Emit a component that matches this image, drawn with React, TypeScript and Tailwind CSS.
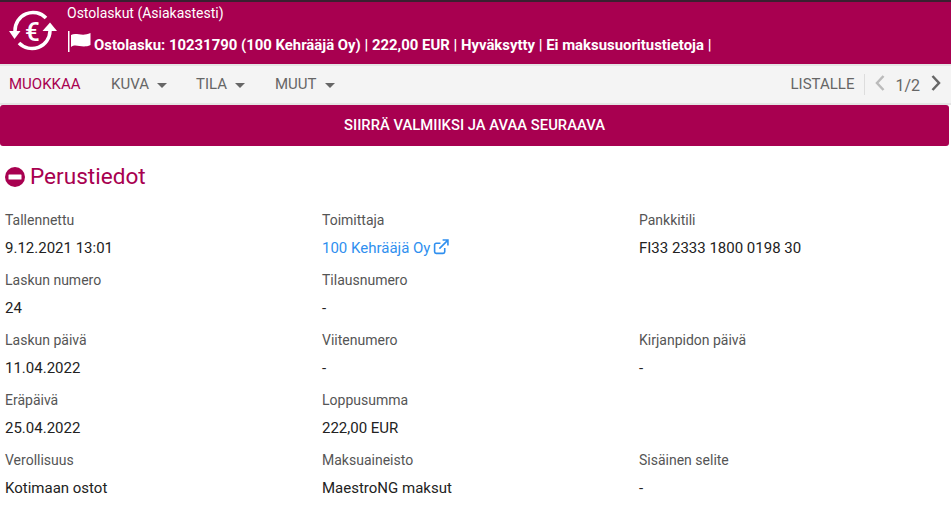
import React from 'react';

const rows = [
  [['Tallennettu', '9.12.2021 13:01'], ['Toimittaja', 'LINK'], ['Pankkitili', 'FI33 2333 1800 0198 30']],
  [['Laskun numero', '24'], ['Tilausnumero', '-'], null],
  [['Laskun päivä', '11.04.2022'], ['Viitenumero', '-'], ['Kirjanpidon päivä', '-']],
  [['Eräpäivä', '25.04.2022'], ['Loppusumma', '222,00 EUR'], null],
  [['Verollisuus', 'Kotimaan ostot'], ['Maksuaineisto', 'MaestroNG maksut'], ['Sisäinen selite', '-']],
] as const;

function Caret() {
  return <span className="ml-2 inline-block h-0 w-0 border-x-[5px] border-t-[5px] border-x-transparent border-t-[#666] align-middle" />;
}

function Logo() {
  return (
    <svg width="50" height="50" viewBox="0 0 50 50" fill="none" className="shrink-0">
      <path d="M7 23 A18 18 0 0 1 38 10" stroke="white" strokeWidth="3.5" />
      <path d="M42 23 A18 18 0 0 1 11 35" stroke="white" strokeWidth="3.5" />
      <path d="M1 23 H12.5 L6.5 31 Z" fill="white" />
      <path d="M49 23 H34.5 L42 14.5 Z" fill="white" />
      <text x="24.5" y="33" textAnchor="middle" fill="white" fontSize="26" fontWeight="500" fontFamily="Roboto, sans-serif">€</text>
    </svg>
  );
}

export default function App() {
  return (
    <div className="h-[512px] w-[951px] overflow-hidden bg-white font-['Roboto',sans-serif] text-[14px] text-[#222]">
      <header className="flex h-[64px] border-t-2 border-[#3a2030] bg-[#a80050] pl-[8px] text-white">
        <div className="mt-[6px]"><Logo /></div>
        <div className="ml-[9px]">
          <div className="mt-[2px] h-[18px] text-[14px] leading-[18px]">Ostolaskut (Asiakastesti)</div>
          <div className="mt-[13px] flex items-center text-[14.9px] font-bold leading-[20px]">
            <svg width="27" height="22" viewBox="0 0 27 22" className="-mt-[6px] shrink-0">
              <rect x="1" y="0" width="1.5" height="21" fill="white" />
              <path d="M4 4 C9 1 15 6 23.5 2 V14 C15 18 9 12 4 16 Z" fill="white" />
            </svg>
            <span>Ostolasku: 10231790 (100 Kehrääjä Oy) | 222,00 EUR | Hyväksytty | Ei maksusuoritustietoja |</span>
          </div>
        </div>
      </header>
      <nav className="flex h-[41px] items-center border-y-2 border-[#e4e4e4] bg-[#f4f4f4] pl-[9px] text-[15px] text-[#666]">
        <span className="w-[102px] text-[#a80050]">MUOKKAA</span>
        <span className="w-[85px]">KUVA<Caret /></span>
        <span className="w-[79px]">TILA<Caret /></span>
        <span>MUUT<Caret /></span>
        <div className="ml-auto flex items-center">
          <span>LISTALLE</span>
          <span className="ml-[10px] h-[21px] border-l border-[#ddd]" />
          <svg width="12" height="18" viewBox="0 0 12 18" fill="none" className="ml-[9px] -mt-[3px]"><path d="M9.5 2 L3 9 L9.5 16" stroke="#bbb" strokeWidth="2.5" /></svg>
          <span className="ml-[9px] mt-[2px] text-[16px]">1/2</span>
          <svg width="12" height="18" viewBox="0 0 12 18" fill="none" className="ml-[10px] mr-[9px] -mt-[3px]"><path d="M2.5 2 L9 9 L2.5 16" stroke="#666" strokeWidth="2.5" /></svg>
        </div>
      </nav>
      <button className="flex h-[41px] w-[949px] items-center justify-center rounded-[3px] bg-[#a80050] text-[14.8px] font-medium text-white">SIIRRÄ VALMIIKSI JA AVAA SEURAAVA</button>
      <section className="px-[5px]">
        <h2 className="mt-[17px] flex h-[28px] items-center text-[22.6px] font-normal leading-[28px] text-[#a80050]">
          <svg width="20" height="20" viewBox="0 0 20 20" className="mr-[5px] -mt-[1px]">
            <circle cx="10" cy="10" r="10" fill="#a80050" />
            <rect x="3.5" y="7.5" width="13" height="5" rx="0.5" fill="white" />
          </svg>
          Perustiedot
        </h2>
        <div className="mt-[9px] grid grid-cols-[317px_317px_1fr]">
          {rows.flat().map((c, i) => (
            <div key={i} className="h-[60px] pt-[10px]">
              {c && (
                <>
                  <div className="h-[20px] leading-[20px] text-[#555]">{c[0]}</div>
                  <div className="mt-[8px] h-[20px] text-[15px] leading-[20px]">
                    {c[1] === 'LINK' ? (
                      <span className="flex items-center text-[#2f8fef]">
                        100 Kehrääjä Oy
                        <svg width="16" height="16" viewBox="0 0 15 15" fill="none" className="ml-[3px] -mt-[2px]" stroke="#2f8fef" strokeWidth="1.5">
                          <path d="M11 8.5 V12 A1.5 1.5 0 0 1 9.5 13.5 H3 A1.5 1.5 0 0 1 1.5 12 V5.5 A1.5 1.5 0 0 1 3 4 H7" />
                          <path d="M6 9 L13.5 1.5 M9 1 H14 V6" />
                        </svg>
                      </span>
                    ) : c[1]}
                  </div>
                </>
              )}
            </div>
          ))}
        </div>
      </section>
    </div>
  );
}
